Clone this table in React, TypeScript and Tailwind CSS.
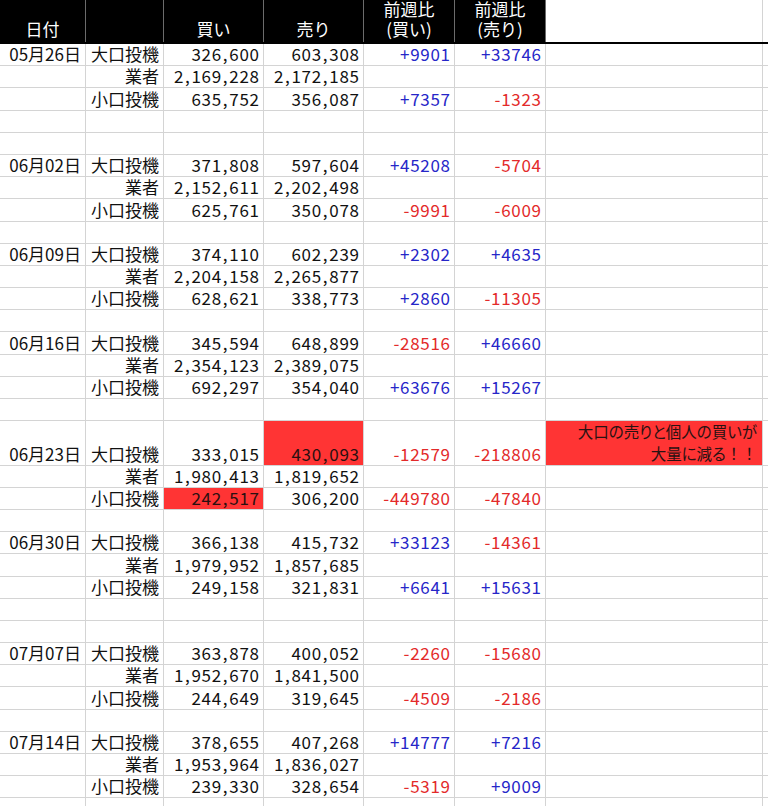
import React from "react";

type DataRow = {
  type: "data";
  date?: string;
  label: string;
  buy: string;
  sell: string;
  dBuy?: string;
  dSell?: string;
  tall?: boolean;
  redBuy?: boolean;
  redSell?: boolean;
  note?: boolean;
};
type BlankRow = { type: "blank" };
type Row = DataRow | BlankRow;

const B: BlankRow = { type: "blank" };

function group(
  date: string,
  a: [string, string, string, string],
  g: [string, string],
  s: [string, string, string, string],
  opts: { tall?: boolean; redBuy?: boolean; redSell?: boolean; note?: boolean } = {}
): DataRow[] {
  return [
    { type: "data", date, label: "大口投機", buy: a[0], sell: a[1], dBuy: a[2], dSell: a[3], tall: opts.tall, redSell: opts.redSell, note: opts.note },
    { type: "data", label: "業者", buy: g[0], sell: g[1] },
    { type: "data", label: "小口投機", buy: s[0], sell: s[1], dBuy: s[2], dSell: s[3], redBuy: opts.redBuy },
  ];
}

const rows: Row[] = [
  ...group("05月26日", ["326,600", "603,308", "+9901", "+33746"], ["2,169,228", "2,172,185"], ["635,752", "356,087", "+7357", "-1323"]),
  B,
  B,
  ...group("06月02日", ["371,808", "597,604", "+45208", "-5704"], ["2,152,611", "2,202,498"], ["625,761", "350,078", "-9991", "-6009"]),
  B,
  ...group("06月09日", ["374,110", "602,239", "+2302", "+4635"], ["2,204,158", "2,265,877"], ["628,621", "338,773", "+2860", "-11305"]),
  B,
  ...group("06月16日", ["345,594", "648,899", "-28516", "+46660"], ["2,354,123", "2,389,075"], ["692,297", "354,040", "+63676", "+15267"]),
  B,
  ...group("06月23日", ["333,015", "430,093", "-12579", "-218806"], ["1,980,413", "1,819,652"], ["242,517", "306,200", "-449780", "-47840"], { tall: true, redBuy: true, redSell: true, note: true }),
  B,
  ...group("06月30日", ["366,138", "415,732", "+33123", "-14361"], ["1,979,952", "1,857,685"], ["249,158", "321,831", "+6641", "+15631"]),
  B,
  B,
  ...group("07月07日", ["363,878", "400,052", "-2260", "-15680"], ["1,952,670", "1,841,500"], ["244,649", "319,645", "-4509", "-2186"]),
  B,
  ...group("07月14日", ["378,655", "407,268", "+14777", "+7216"], ["1,953,964", "1,836,027"], ["239,330", "328,654", "-5319", "+9009"]),
  B,
];

function Num({ v }: { v: string }) {
  const parts = v.split(",");
  return (
    <span className="tracking-[0.7px]">
      {parts.map((p, i) => (
        <React.Fragment key={i}>
          {i > 0 && <span className="mx-[1px]">,</span>}
          {p}
        </React.Fragment>
      ))}
    </span>
  );
}

function Diff({ v }: { v?: string }) {
  if (!v) return null;
  const cls = v.startsWith("+") ? "text-[#2626c8]" : "text-[#e32a2a]";
  return <span className={`tracking-[0.7px] ${cls}`}>{v}</span>;
}

const cellBase =
  "flex items-end justify-end border-r border-b border-[#d4d4d4] px-[4px] leading-[22px] whitespace-nowrap";
const numCell =
  "flex items-end justify-end border-r border-b border-[#d4d4d4] pl-[3px] pr-[3.3px] leading-[22px] whitespace-nowrap";

function BodyRow({ r }: { r: Row }) {
  const h = r.type === "data" && r.tall ? "h-[44.4px]" : "h-[22.2px]";
  if (r.type === "blank") {
    return (
      <div className={`flex ${h}`}>
        <div className={`${cellBase} w-[86px]`} />
        <div className={`${cellBase} w-[78px]`} />
        <div className={`${cellBase} w-[100px]`} />
        <div className={`${cellBase} w-[100px]`} />
        <div className={`${cellBase} w-[91px]`} />
        <div className={`${cellBase} w-[91px]`} />
        <div className={`${cellBase} w-[217px]`} />
        <div className="w-[5px] border-b border-[#d4d4d4]" />
      </div>
    );
  }
  return (
    <div className={`flex ${h}`}>
      <div className={`${cellBase} w-[86px]`}>{r.date}</div>
      <div className={`${cellBase} w-[78px]`}>{r.label}</div>
      <div className={`${numCell} w-[100px] ${r.redBuy ? "bg-[#ff3434] text-[#2a1010]" : ""}`}>
        <Num v={r.buy} />
      </div>
      <div className={`${numCell} w-[100px] ${r.redSell ? "bg-[#ff3434] text-[#2a1010]" : ""}`}>
        <Num v={r.sell} />
      </div>
      <div className={`${numCell} w-[91px]`}>
        <Diff v={r.dBuy} />
      </div>
      <div className={`${numCell} w-[91px]`}>
        <Diff v={r.dSell} />
      </div>
      {r.note ? (
        <div className="flex w-[217px] flex-col items-end justify-end border-r border-b border-[#d4d4d4] bg-[#ff3434] pr-[5px] pb-[1px] text-right text-[15.5px] leading-[22px] text-[#2a1212] [font-feature-settings:'palt']">
          <span>大口の売りと個人の買いが</span>
          <span>
            大量に減る<span className="[font-feature-settings:normal]">！！</span>
          </span>
        </div>
      ) : (
        <div className={`${cellBase} w-[217px]`} />
      )}
      <div className="w-[5px] border-b border-[#d4d4d4]" />
    </div>
  );
}

const headBase =
  "flex h-[42px] flex-col items-center justify-end border-r border-[#6b6b6b] bg-black pb-[3px] leading-[20px] text-white";

export default function App() {
  return (
    <div className="h-[806px] w-[768px] overflow-hidden bg-white text-[17px] text-[#111] [font-family:'Noto_Sans_CJK_JP','Noto_Sans',sans-serif]">
      <div className="flex h-[44px] border-b-2 border-black">
        <div className={`${headBase} w-[86px]`}>
          <span>日付</span>
        </div>
        <div className={`${headBase} w-[78px]`} />
        <div className={`${headBase} w-[100px]`}>
          <span>買い</span>
        </div>
        <div className={`${headBase} w-[100px]`}>
          <span>売り</span>
        </div>
        <div className={`${headBase} w-[91px]`}>
          <span>前週比</span>
          <span>(買い)</span>
        </div>
        <div className={`${headBase} w-[91px]`}>
          <span>前週比</span>
          <span>(売り)</span>
        </div>
        <div className="h-[42px] w-[217px] border-r border-[#d4d4d4]" />
        <div className="h-[42px] w-[5px]" />
      </div>
      {rows.map((r, i) => (
        <BodyRow key={i} r={r} />
      ))}
    </div>
  );
}
